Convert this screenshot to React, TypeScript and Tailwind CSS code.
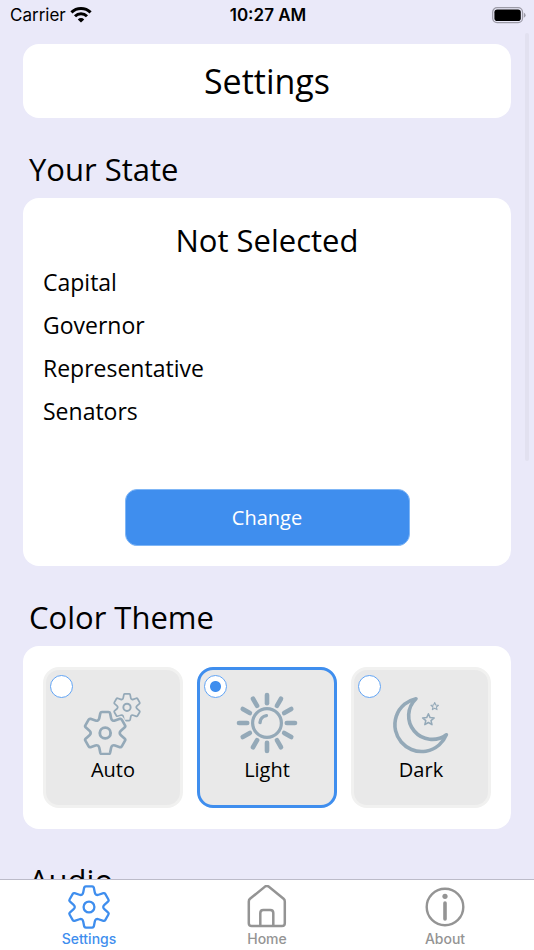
import { useState } from 'react'
import type { ReactNode } from 'react'

type Theme = 'auto' | 'light' | 'dark'

const stateFields = ['Capital', 'Governor', 'Representative', 'Senators']

// One tooth plus the valley after it, turned round the centre six times
const rotate = (x: number, y: number, deg: number) => {
  const a = (deg * Math.PI) / 180
  return `${(x * Math.cos(a) - y * Math.sin(a)).toFixed(2)} ${(x * Math.sin(a) + y * Math.cos(a)).toFixed(2)}`
}

const gearPath =
  [0, 60, 120, 180, 240, 300]
    .map((deg, i) => {
      const p = (x: number, y: number) => rotate(x, y, deg)
      return `${i === 0 ? 'M' : 'L'}${p(-5.8, -14.4)} L${p(-4.8, -19.4)} Q${p(-4.5, -20.6)} ${p(-3.2, -20.6)} L${p(3.2, -20.6)} Q${p(4.5, -20.6)} ${p(4.8, -19.4)} L${p(5.8, -14.4)} C${p(6.2, -12.4)} ${rotate(-6.2, -12.4, deg + 60)} ${rotate(-5.8, -14.4, deg + 60)}`
    })
    .join(' ') + ' Z'

const starPath =
  'M0 -6 L1.7 -2.1 L5.8 -1.8 L2.6 0.9 L3.6 5 L0 2.8 L-3.6 5 L-2.6 0.9 L-5.8 -1.8 L-1.7 -2.1 Z'

function AutoIcon() {
  return (
    <svg viewBox="0 0 64 64" className="w-16 h-16" fill="none" stroke="#94a9b8" strokeLinejoin="round" aria-hidden="true">
      <g transform="translate(46 16.3) scale(.65)">
        <path d={gearPath} strokeWidth="2.7" />
        <circle r="5.6" strokeWidth="3" />
      </g>
      <g transform="translate(24.2 42) scale(1.02)">
        <path d={gearPath} stroke="#e9e9e9" strokeWidth="5" fill="#e9e9e9" />
        <path d={gearPath} strokeWidth="2.6" />
        <circle r="5.3" strokeWidth="2.8" />
      </g>
    </svg>
  )
}

function LightIcon() {
  return (
    <svg viewBox="-32 -32 64 64" className="w-16 h-16" fill="none" stroke="#94a9b8" strokeLinecap="round" aria-hidden="true">
      <circle r="14.4" strokeWidth="3.2" />
      <path d="M-7 -.4 A7.5 7.5 0 0 1 -.6 -7.4" strokeWidth="3.4" />
      {[0, 30, 60, 90, 120, 150, 180, 210, 240, 270, 300, 330].map(deg => (
        <path key={deg} d="M0 -19.8 V-28" strokeWidth="4.6" transform={`rotate(${deg})`} />
      ))}
    </svg>
  )
}

function DarkIcon() {
  return (
    <svg viewBox="0 0 64 64" className="w-16 h-16" fill="none" stroke="#94a9b8" strokeLinejoin="round" aria-hidden="true">
      <path d="M27 7.7 A26.7 26.7 0 1 0 57.4 43.7 A23.6 23.6 0 0 1 27 7.7 Z" strokeWidth="3.6" />
      <path d={starPath} transform="translate(39.4 28.7)" strokeWidth="1.5" />
      <path d={starPath} transform="translate(45.7 15.4) scale(.65)" strokeWidth="1.6" />
    </svg>
  )
}

function SettingsIcon() {
  return (
    <svg viewBox="-22 -22 44 44" className="w-11 h-11" fill="none" stroke="currentColor" strokeWidth="2.3" strokeLinejoin="round" aria-hidden="true">
      <path d={gearPath} />
      <circle r="5.4" />
    </svg>
  )
}

function HomeIcon() {
  return (
    <svg viewBox="0 0 44 44" className="w-11 h-11" fill="none" stroke="currentColor" strokeWidth="2.5" strokeLinejoin="round" aria-hidden="true">
      <path d="M3.8 16.4 Q3.8 14.8 5 13.8 L20 1.6 Q21.8 .2 23.6 1.6 L38.6 13.8 Q39.8 14.8 39.8 16.4 V38.2 Q39.8 41 37 41 H6.6 Q3.8 41 3.8 38.2 Z" />
      <path d="M15.3 41 V28 Q15.3 25 18.3 25 H25.3 Q28.3 25 28.3 28 V41" />
    </svg>
  )
}

function AboutIcon() {
  return (
    <svg viewBox="-22 -22 44 44" className="w-11 h-11" fill="none" stroke="currentColor" strokeLinecap="round" aria-hidden="true">
      <circle r="18.3" strokeWidth="2.4" />
      <path d="M0 -4 V12" strokeWidth="3.6" />
      <circle cy="-10.7" r="2.6" fill="currentColor" stroke="none" />
    </svg>
  )
}

function StatusBar() {
  return (
    <header className="grid grid-cols-3 items-center h-[30px] shrink-0 pl-[10px] pr-2 font-['Inter',sans-serif] text-[17px] leading-[30px]">
      <div className="flex items-center gap-1">
        <span>Carrier</span>
        <svg viewBox="0 0 22 16" className="w-[22px] h-4" fill="none" stroke="#000" strokeWidth="3" aria-hidden="true">
          <path d="M1.4 5.4 A13.8 13.8 0 0 1 20.6 5.4" />
          <path d="M5 9.2 A8.6 8.6 0 0 1 17 9.2" />
          <path d="M11 15.6 L7.8 12.4 A4.6 4.6 0 0 1 14.2 12.4 Z" fill="#000" stroke="none" />
        </svg>
      </div>
      <span className="text-center font-semibold">10:27 AM</span>
      <svg viewBox="0 0 34 17" className="w-[34px] h-[17px] justify-self-end" aria-hidden="true">
        <rect x=".7" y=".7" width="29.8" height="15" rx="4.4" fill="none" stroke="#9b9aa6" strokeWidth="1.2" />
        <rect x="2.4" y="2.4" width="26.4" height="11.6" rx="2.8" fill="#000" />
        <path d="M31.8 5.6 Q33.6 6.6 33.6 8.2 Q33.6 9.8 31.8 10.8 Z" fill="#9b9aa6" />
      </svg>
    </header>
  )
}

function SectionTitle({ children }: { children: ReactNode }) {
  return <h2 className="pt-[30px] pb-2 pl-[6px] text-[31px] leading-[42px]">{children}</h2>
}

const themes: { id: Theme; label: string; icon: ReactNode }[] = [
  { id: 'auto', label: 'Auto', icon: <AutoIcon /> },
  { id: 'light', label: 'Light', icon: <LightIcon /> },
  { id: 'dark', label: 'Dark', icon: <DarkIcon /> },
]

const tabs = [
  { label: 'Settings', icon: <SettingsIcon />, active: true },
  { label: 'Home', icon: <HomeIcon />, active: false },
  { label: 'About', icon: <AboutIcon />, active: false },
]

export default function App() {
  const [theme, setTheme] = useState<Theme>('light')

  return (
    <div className="relative flex flex-col h-screen bg-[#eae9f9] text-black font-['Open_Sans',sans-serif]">
      <StatusBar />

      <main className="flex-1 min-h-0 overflow-y-auto [scrollbar-width:none] px-[23px] pt-[14px]">
        <h1 className="bg-white rounded-2xl py-4 text-center text-[34px] leading-[42px]">Settings</h1>

        {/* State */}
        <SectionTitle>Your State</SectionTitle>
        <section className="bg-white rounded-2xl px-5 pt-[21px] pb-5">
          <h3 className="text-center text-[31px] leading-[42px]">Not Selected</h3>
          <ul className="text-[23px] leading-[43px]">
            {stateFields.map(field => (
              <li key={field}>{field}</li>
            ))}
          </ul>
          <button className="block w-[285px] h-[57px] mx-auto mt-14 rounded-xl bg-[#3f8eee] border border-[#7fb6f6] text-white text-[20px]">
            Change
          </button>
        </section>

        {/* Theme */}
        <SectionTitle>Color Theme</SectionTitle>
        <section className="grid grid-cols-3 gap-[14px] bg-white rounded-2xl px-5 py-[21px]">
          {themes.map(({ id, label, icon }) => (
            <label
              key={id}
              className={`relative flex flex-col items-center h-[141px] pt-[21px] rounded-2xl border-3 bg-[#e9e9e9] ${theme === id ? 'border-[#3f8eee]' : 'border-[#f1f1f0]'}`}
            >
              <input
                type="radio"
                name="theme"
                value={id}
                checked={theme === id}
                onChange={() => setTheme(id)}
                className="absolute left-1 top-[5px] appearance-none w-[23px] h-[23px] rounded-full bg-white border border-[#62a4f4] checked:bg-[radial-gradient(circle,#3f8eee_5px,#fff_6px)]"
              />
              {icon}
              <span className="text-[20px] leading-[30px]">{label}</span>
            </label>
          ))}
        </section>

        {/* Audio */}
        <SectionTitle>Audio</SectionTitle>
        <section className="bg-white rounded-2xl h-40" />
      </main>

      {/* Scroll indicator */}
      <div className="absolute right-[5px] top-[33px] w-1 h-[45%] rounded-full bg-[#e2e1f0]" />

      <nav className="grid grid-cols-3 shrink-0 h-[71px] pt-[5px] bg-white border-t border-[#bcbbc9] font-['Inter',sans-serif]">
        {tabs.map(({ label, icon, active }) => (
          <a
            key={label}
            href="#"
            aria-current={active ? 'page' : undefined}
            className={`flex flex-col items-center text-[14px] leading-5 font-medium ${active ? 'text-[#3f8eee]' : 'text-[#949494]'}`}
          >
            {icon}
            {label}
          </a>
        ))}
      </nav>
    </div>
  )
}
